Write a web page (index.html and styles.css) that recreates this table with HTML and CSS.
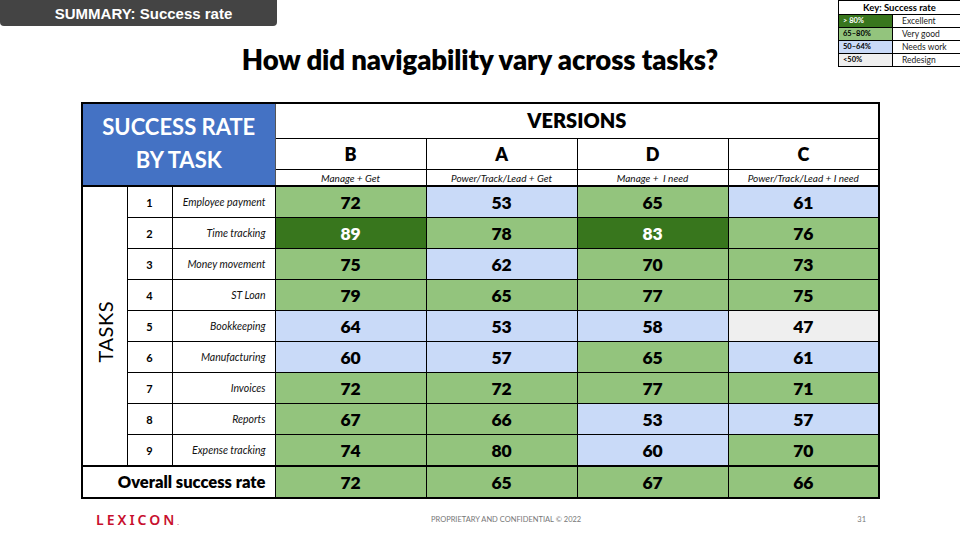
FILE: index.html
```html
<!DOCTYPE html>
<html>
<head>
<meta charset="utf-8">
<link rel="stylesheet" href="styles.css">
</head>
<body>
<div class="slide">
  <div class="top">
    <div class="badge">SUMMARY: Success rate</div>
  </div>
  <table class="key">
    <tr><th colspan="2">Key: Success rate</th></tr>
    <tr><td class="kc dg">&gt; 80%</td><td class="kl">Excellent</td></tr>
    <tr><td class="kc lg">65–80%</td><td class="kl">Very good</td></tr>
    <tr><td class="kc lb">50–64%</td><td class="kl">Needs work</td></tr>
    <tr><td class="kc gr">&lt;50%</td><td class="kl">Redesign</td></tr>
  </table>
  <h1 class="title">How did navigability vary across tasks?</h1>
  <table class="grid">
    <colgroup>
      <col class="c-tasks"><col class="c-num"><col class="c-name">
      <col class="c-v"><col class="c-v"><col class="c-v"><col class="c-v">
    </colgroup>
    <tr class="r-ver">
      <th class="hero" colspan="3" rowspan="3">SUCCESS RATE<br>BY TASK</th>
      <th class="versions" colspan="4">VERSIONS</th>
    </tr>
    <tr class="r-letter">
      <th>B</th><th>A</th><th>D</th><th>C</th>
    </tr>
    <tr class="r-sub">
      <td>Manage + Get</td><td>Power/Track/Lead + Get</td><td>Manage +&nbsp; I need</td><td>Power/Track/Lead + I need</td>
    </tr>
    <tr class="r-data first">
      <td class="tasks" rowspan="9"><span>TASKS</span></td>
      <td class="num">1</td><td class="name">Employee payment</td>
      <td class="v lg">72</td><td class="v lb">53</td><td class="v lg">65</td><td class="v lb">61</td>
    </tr>
    <tr class="r-data">
      <td class="num">2</td><td class="name">Time tracking</td>
      <td class="v dg">89</td><td class="v lg">78</td><td class="v dg">83</td><td class="v lg">76</td>
    </tr>
    <tr class="r-data">
      <td class="num">3</td><td class="name">Money movement</td>
      <td class="v lg">75</td><td class="v lb">62</td><td class="v lg">70</td><td class="v lg">73</td>
    </tr>
    <tr class="r-data">
      <td class="num">4</td><td class="name">ST Loan</td>
      <td class="v lg">79</td><td class="v lg">65</td><td class="v lg">77</td><td class="v lg">75</td>
    </tr>
    <tr class="r-data">
      <td class="num">5</td><td class="name">Bookkeeping</td>
      <td class="v lb">64</td><td class="v lb">53</td><td class="v lb">58</td><td class="v gr">47</td>
    </tr>
    <tr class="r-data">
      <td class="num">6</td><td class="name">Manufacturing</td>
      <td class="v lb">60</td><td class="v lb">57</td><td class="v lg">65</td><td class="v lb">61</td>
    </tr>
    <tr class="r-data">
      <td class="num">7</td><td class="name">Invoices</td>
      <td class="v lg">72</td><td class="v lg">72</td><td class="v lg">77</td><td class="v lg">71</td>
    </tr>
    <tr class="r-data">
      <td class="num">8</td><td class="name">Reports</td>
      <td class="v lg">67</td><td class="v lg">66</td><td class="v lb">53</td><td class="v lb">57</td>
    </tr>
    <tr class="r-data">
      <td class="num">9</td><td class="name">Expense tracking</td>
      <td class="v lg">74</td><td class="v lg">80</td><td class="v lb">60</td><td class="v lg">70</td>
    </tr>
    <tr class="r-data overall">
      <td class="ov-label" colspan="3">Overall success rate</td>
      <td class="v lg">72</td><td class="v lg">65</td><td class="v lg">67</td><td class="v lg">66</td>
    </tr>
  </table>
  <div class="footer">
    <div class="logo">LEX<span class="i">I</span>CON<span class="dot">.</span></div>
    <div class="conf">PROPRIETARY AND CONFIDENTIAL © 2022</div>
    <div class="page">31</div>
  </div>
</div>
</body>
</html>
```
FILE: styles.css
```css
html, body { margin: 0; padding: 0; background: #fff; }
.slide {
  position: relative;
  width: 960px;
  height: 540px;
  overflow: hidden;
  font-family: Lato, "Noto Sans", sans-serif;
  color: #000;
}
.top { display: flex; height: 26px; }
.badge {
  width: 277px;
  height: 26px;
  background: #444444;
  border-radius: 0 0 4px 4px;
  color: #fff;
  font-family: "Liberation Sans", Arial, sans-serif;
  font-weight: bold;
  font-size: 15px;
  line-height: 27px;
  text-align: center;
  box-sizing: border-box;
  padding-left: 10px;
}
.key {
  position: absolute;
  top: 0;
  left: 838px;
  width: 123px;
  border-collapse: collapse;
  font-size: 8px;
}
.key th {
  border: 1px solid #000;
  height: 13px;
  padding: 0;
  font-size: 9.5px;
  font-weight: bold;
  line-height: 12px;
}
.key td {
  border: 1px solid #000;
  height: 12px;
  padding: 0 0 0 4px;
  line-height: 12px;
}
.key .kc { width: 49px; font-weight: bold; font-size: 7.5px; }
.key .kl { padding-left: 9px; font-size: 8.5px; color: #222; }
.key .dg { color: #fff; }

.title {
  margin: 17px 0 0 0;
  text-align: center;
  font-size: 27.5px;
  line-height: 33px;
  font-weight: 800;
  letter-spacing: -0.1px;
}

.grid {
  margin: 26px 0 0 81px;
  width: 798px;
  border-collapse: collapse;
  table-layout: fixed;
  border: 2px solid #000;
}
.c-tasks { width: 45px; }
.c-num { width: 45px; }
.c-name { width: 103px; }
.c-v { width: 151px; }
.grid th, .grid td {
  border: 1px solid #000;
  padding: 0;
  text-align: center;
  vertical-align: middle;
}
.hero {
  background: #4472c4;
  color: #fff;
  font-size: 22px;
  font-weight: bold;
  line-height: 33px;
  padding-bottom: 4px !important;
  border-right: 1px solid #555 !important;
}
.r-ver th { height: 31px; }
.versions { font-size: 20px; font-weight: 800; padding-bottom: 3px !important; }
.r-letter th { height: 30px; font-size: 18px; font-weight: 800; }
.r-sub td { height: 15px; font-size: 10px; font-style: italic; line-height: 14px; color: #111; }
.r-data td { height: 30px; }
.r-data.first td { border-top: 2px solid #000; }
.tasks { border-right: 1px solid #000; }
.tasks span {
  display: inline-block;
  writing-mode: vertical-rl;
  transform: rotate(180deg);
  font-size: 20px;
  letter-spacing: 0.5px;
  margin-top: 14px;
}
.num { font-size: 11px; font-weight: bold; }
.name {
  text-align: right !important;
  padding-right: 9px !important;
  font-size: 10.5px;
  font-style: italic;
  color: #111;
}
.v { font-size: 17.5px; font-weight: 800; }
.overall td { border-top: 2px solid #000; }
.ov-label {
  text-align: right !important;
  padding-right: 9px !important;
  font-size: 16.5px;
  font-weight: 800;
}
.dg { background: #38761d; color: #fff; }
.lg { background: #93c47d; }
.lb { background: #c9daf8; }
.gr { background: #efefef; }

.footer {
  display: flex;
  align-items: center;
  margin-top: 12px;
  height: 16px;
}
.logo {
  margin-left: 96px;
  width: 90px;
  color: #c8102e;
  font-family: "Noto Sans", sans-serif;
  font-size: 14px;
  letter-spacing: 3px;
  font-weight: 600;
  white-space: nowrap;
}
.logo .dot { font-size: 6px; letter-spacing: 0; }
.conf {
  margin-left: 245px;
  font-size: 7.5px;
  color: #777;
}
.page {
  margin-left: auto;
  margin-right: 94px;
  font-size: 7.5px;
  color: #777;
}
```
